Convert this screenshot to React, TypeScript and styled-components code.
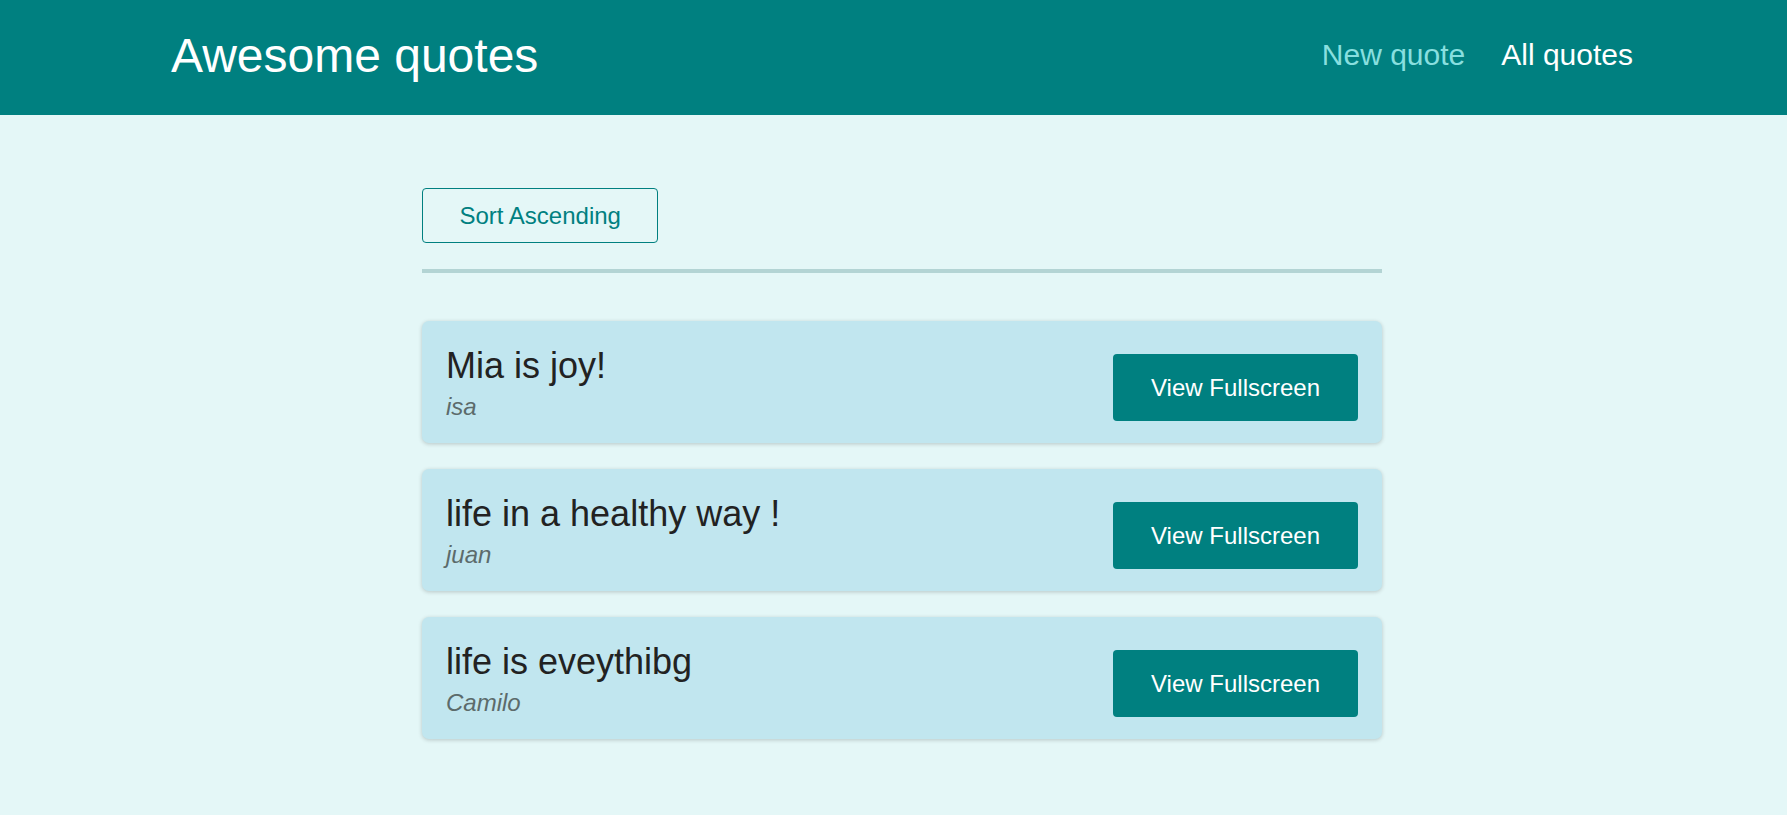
import React from "react";
import styled, { createGlobalStyle } from "styled-components";

const GlobalStyle = createGlobalStyle`
  * { box-sizing: border-box; }
  html, body {
    margin: 0;
    padding: 0;
    font-family: "Liberation Sans", Arial, sans-serif;
    background-color: #e4f7f7;
  }
`;

const Header = styled.header`
  height: 115px;
  display: flex;
  align-items: center;
  justify-content: space-between;
  background-color: #008080;
  padding: 0 154px 4px 171px;
`;

const Logo = styled.div`
  font-size: 48px;
  color: #ffffff;
  line-height: 1.15;
`;

const NavList = styled.ul`
  list-style: none;
  margin: 0;
  padding: 0;
  display: flex;
  gap: 36px;
`;

const NavLink = styled.a<{ $active?: boolean }>`
  text-decoration: none;
  font-size: 30px;
  line-height: 1.15;
  color: ${(p) => (p.$active ? "#ffffff" : "#88dfdf")};
  cursor: pointer;
`;

const Main = styled.main`
  width: 977px;
  margin: 73px auto 0;
  padding: 0 0 40px 17px;
`;

const Sorting = styled.div`
  padding-bottom: 26px;
  border-bottom: 4px solid #b3d4d4;
  margin-bottom: 48px;
`;

const OutlineButton = styled.button`
  font: inherit;
  font-size: 24px;
  line-height: 1.15;
  color: #008080;
  background: transparent;
  border: 1px solid #008080;
  border-radius: 4px;
  padding: 12.7px 36.5px;
  cursor: pointer;
`;

const List = styled.ul`
  list-style: none;
  margin: 0;
  padding: 0;
  display: flex;
  flex-direction: column;
  gap: 26px;
`;

const Item = styled.li`
  display: flex;
  justify-content: space-between;
  align-items: center;
  background-color: #c1e6ef;
  border-radius: 7px;
  padding: 24px 24px 22px;
  box-shadow: 0 1px 4px rgba(0, 0, 0, 0.2);
`;

const Figure = styled.figure`
  margin: 0;
  display: flex;
  flex-direction: column;
  gap: 6px;
`;

const Quote = styled.blockquote`
  margin: 0;
  font-size: 36px;
  line-height: 1.15;
  color: #222222;
`;

const Author = styled.figcaption`
  font-size: 24px;
  line-height: 1.15;
  font-style: italic;
  color: #5c6b6b;
`;

const SolidButton = styled.a`
  display: inline-block;
  margin-top: 9px;
  font-size: 24px;
  line-height: 1.15;
  color: #ffffff;
  background-color: #008080;
  border-radius: 4px;
  padding: 19.7px 38px;
  text-decoration: none;
  cursor: pointer;
`;

const quotes = [
  { id: "q1", text: "Mia is joy!", author: "isa" },
  { id: "q2", text: "life in a healthy way !", author: "juan" },
  { id: "q3", text: "life is eveythibg", author: "Camilo" },
];

export default function App() {
  return (
    <>
      <GlobalStyle />
      <Header>
        <Logo>Awesome quotes</Logo>
        <nav>
          <NavList>
            <li>
              <NavLink>New quote</NavLink>
            </li>
            <li>
              <NavLink $active>All quotes</NavLink>
            </li>
          </NavList>
        </nav>
      </Header>
      <Main>
        <Sorting>
          <OutlineButton>Sort Ascending</OutlineButton>
        </Sorting>
        <List>
          {quotes.map((q) => (
            <Item key={q.id}>
              <Figure>
                <Quote>{q.text}</Quote>
                <Author>{q.author}</Author>
              </Figure>
              <SolidButton>View Fullscreen</SolidButton>
            </Item>
          ))}
        </List>
      </Main>
    </>
  );
}
